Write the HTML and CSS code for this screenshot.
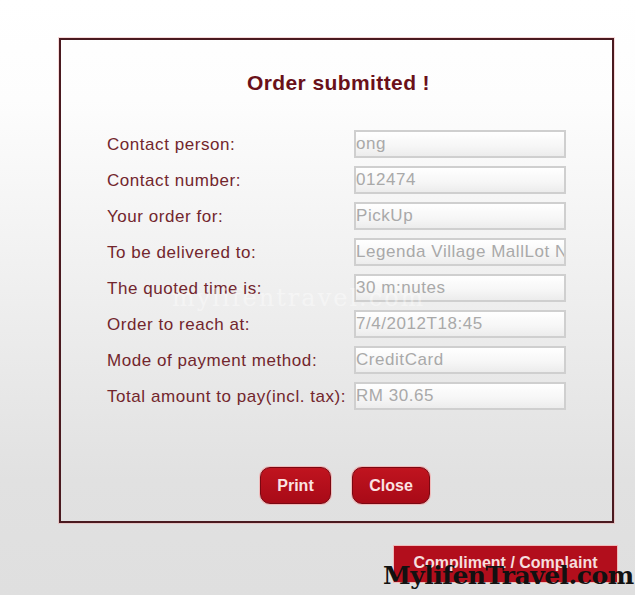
FILE: index.html
```html
<!DOCTYPE html>
<html>
<head>
<meta charset="utf-8">
<link rel="stylesheet" href="styles.css">
</head>
<body>
<div class="page">
  <div class="dialog">
    <h1 class="title">Order submitted !</h1>
    <div class="form">
      <div class="label">Contact person:</div><div class="field">ong</div>
      <div class="label">Contact number:</div><div class="field">012474</div>
      <div class="label">Your order for:</div><div class="field">PickUp</div>
      <div class="label">To be delivered to:</div><div class="field">Legenda Village MallLot No</div>
      <div class="label">The quoted time is:</div><div class="field">30 m:nutes</div>
      <div class="label">Order to reach at:</div><div class="field">7/4/2012T18:45</div>
      <div class="label">Mode of payment method:</div><div class="field">CreditCard</div>
      <div class="label">Total amount to pay(incl. tax):</div><div class="field">RM 30.65</div>
    </div>
    <div class="actions">
      <button class="btn btn-print">Print</button>
      <button class="btn btn-close">Close</button>
    </div>
  </div>
  <div class="footer">
    <button class="complaint">Compliment / Complaint</button>
  </div>
  <div class="mark-faint">mylifentravel.com</div>
  <div class="mark">MylifenTravel.com</div>
</div>
</body>
</html>
```
FILE: styles.css
```css
html, body {
  margin: 0;
  padding: 0;
}
body {
  width: 635px;
  height: 595px;
  overflow: hidden;
  font-family: "Liberation Sans", Arial, sans-serif;
  background: linear-gradient(to bottom, #ffffff 0px, #fdfdfd 100px, #ececec 330px, #e1e1e1 480px, #dfdfdf 595px);
}
.page {
  position: relative;
  height: 595px;
  padding-top: 38px;
  box-sizing: border-box;
}
.dialog {
  margin-left: 59px;
  width: 555px;
  box-sizing: border-box;
  border: 2px solid #4a1a20;
  box-shadow: 0 0 0 1px rgba(240, 150, 150, 0.35);
  padding: 30px 0 17px 46px;
}
.title {
  margin: 0 0 34px -46px;
  text-align: center;
  font-size: 21px;
  line-height: 26px;
  letter-spacing: 0.4px;
  font-weight: bold;
  color: #6a1019;
  padding-left: 4px;
}
.form {
  display: grid;
  grid-template-columns: 247px 212px;
  row-gap: 8px;
}
.label {
  font-size: 17px;
  line-height: 29px;
  height: 28px;
  color: #72262d;
  white-space: nowrap;
  letter-spacing: 0.55px;
}
.field {
  height: 28px;
  box-sizing: border-box;
  border: 2px solid #cfcfcf;
  background: linear-gradient(to bottom, #ffffff 0%, #f6f6f6 60%, #ececec 100%);
  color: #a9a9a9;
  font-size: 17px;
  letter-spacing: 0.55px;
  line-height: 24px;
  padding-left: 0;
  white-space: nowrap;
  overflow: hidden;
}
.actions {
  display: flex;
  gap: 21px;
  margin-top: 57px;
  padding-left: 153px;
}
.btn {
  height: 37px;
  border: 1px solid #7a0812;
  border-radius: 10px;
  background: linear-gradient(to bottom, #c0141f 0%, #a80a17 100%);
  box-shadow: 0 0 0 1px rgba(250, 160, 160, 0.6);
  color: #fbe3e3;
  font-family: "Liberation Sans", Arial, sans-serif;
  font-size: 16px;
  font-weight: bold;
  padding: 0;
}
.btn-print { width: 71px; }
.btn-close { width: 78px; }
.footer {
  margin-top: 23px;
  padding-left: 394px;
}
.complaint {
  width: 223px;
  height: 36px;
  border: none;
  background: #b20e1c;
  box-shadow: 0 0 0 1px rgba(250, 160, 160, 0.6);
  color: #f6dede;
  font-family: "Liberation Sans", Arial, sans-serif;
  font-size: 16px;
  font-weight: bold;
  padding: 0 0 2px 0;
}
.mark-faint {
  position: absolute;
  left: 172px;
  top: 284px;
  font-family: "DejaVu Serif", serif;
  font-size: 24px;
  letter-spacing: 2px;
  color: rgba(255, 255, 255, 0.4);
}
.mark {
  position: absolute;
  left: 383px;
  top: 561px;
  font-family: "DejaVu Serif", serif;
  font-weight: bold;
  font-size: 25px;
  letter-spacing: -0.5px;
  color: #111111;
  white-space: nowrap;
}
```
